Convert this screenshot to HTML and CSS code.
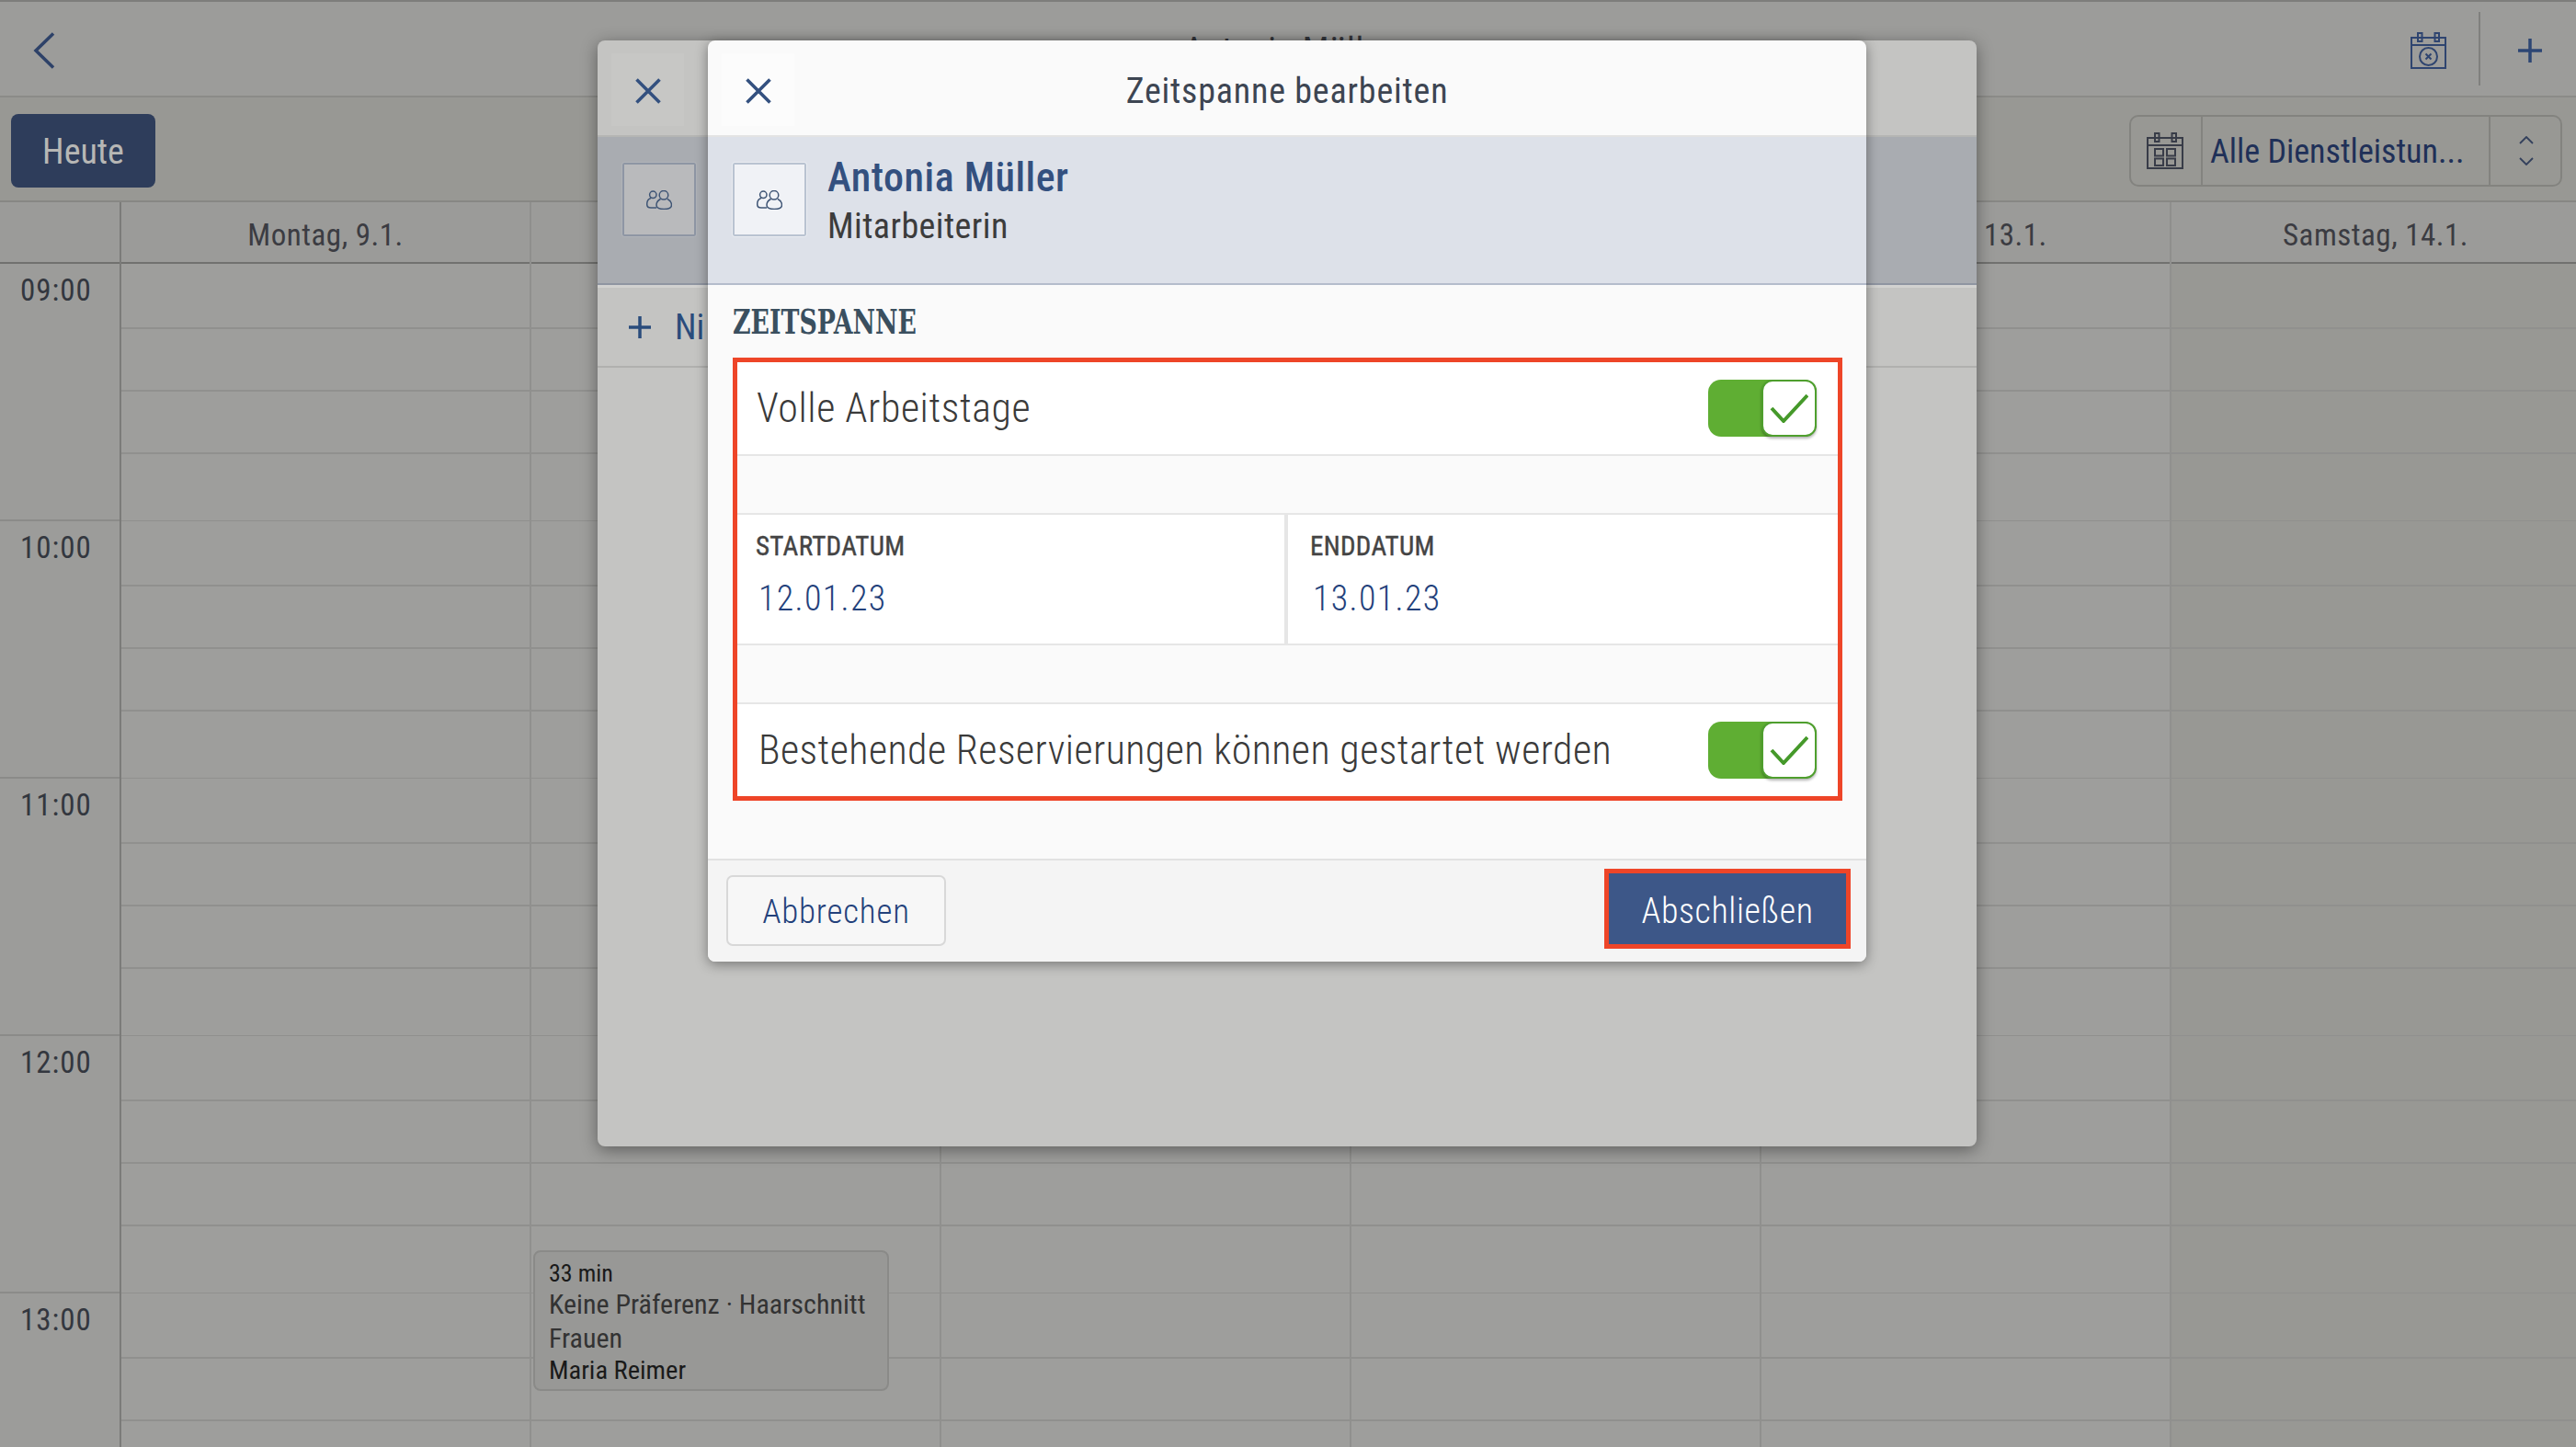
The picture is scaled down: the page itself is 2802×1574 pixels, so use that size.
FILE: index.html
```html
<!DOCTYPE html>
<html lang="de">
<head>
<meta charset="utf-8">
<title>Zeitspanne bearbeiten</title>
<link rel="stylesheet" href="styles.css">
</head>
<body>
<div class="app">
  <header class="topbar">
    <div class="topbar-left">
      <svg class="back-icon" viewBox="0 0 24 40"><path d="M22 1.500 3 20l19 18.500"/></svg>
    </div>
    <div class="topbar-title">Antonia Müller</div>
    <div class="topbar-right">
      <svg class="cal-x-icon" viewBox="0 0 39 40">
        <path d="M1 6h37v33H1zM1 14h37"/>
        <rect x="8" y="1" width="4.500" height="9"/><rect x="26.500" y="1" width="4.500" height="9"/>
        <circle cx="19.500" cy="26.500" r="9.500"/>
        <path d="M16.500 23.500l6 6M22.500 23.500l-6 6"/>
      </svg>
      <span class="topbar-divider"></span>
      <svg class="plus-icon" viewBox="0 0 26 26"><path d="M13 0v26M0 13h26"/></svg>
    </div>
  </header>

  <div class="subbar">
    <button class="today">Heute</button>
    <div class="segment">
      <div class="segment-icon">
        <svg class="cal-grid-icon" viewBox="0 0 40 40">
          <path d="M1 6h38v33H1zM1 14h38"/>
          <rect x="9" y="1" width="4.500" height="9"/><rect x="27.500" y="1" width="4.500" height="9"/>
          <rect x="9" y="18" width="9" height="7.500"/><rect x="22" y="18" width="9" height="7.500"/>
          <rect x="9" y="28.500" width="9" height="7.500"/><rect x="22" y="28.500" width="9" height="7.500"/>
        </svg>
      </div>
      <div class="segment-text">Alle Dienstleistun...</div>
      <div class="segment-arrows">
        <svg class="arrows-icon" viewBox="0 0 16 32"><path d="M1 8l7-7 7 7M1 24l7 7 7-7"/></svg>
      </div>
    </div>
  </div>

  <div class="day-head">
    <div class="head-gutter"></div>
    <div class="head-cell">Montag, 9.1.</div>
    <div class="head-cell">Dienstag, 10.1.</div>
    <div class="head-cell">Mittwoch, 11.1.</div>
    <div class="head-cell">Donnerstag, 12.1.</div>
    <div class="head-cell">Freitag, 13.1.</div>
    <div class="head-cell">Samstag, 14.1.</div>
  </div>

  <div class="calendar">
    <div class="gutter">
      <div class="hour">09:00</div>
      <div class="hour">10:00</div>
      <div class="hour">11:00</div>
      <div class="hour">12:00</div>
      <div class="hour">13:00</div>
    </div>
    <div class="day"></div>
    <div class="day">
      <div class="event">
        <div class="event-time">33 min</div>
        <div class="event-main">Keine Präferenz · Haarschnitt Frauen</div>
        <div class="event-name">Maria Reimer</div>
      </div>
    </div>
    <div class="day"></div>
    <div class="day"></div>
    <div class="day"></div>
    <div class="day day-sat"></div>
  </div>

  <section class="modal modal-back">
    <div class="modal-head">
      <button class="close close-back">
        <svg class="close-icon" viewBox="0 0 28 28"><path d="M1.500 1.500l25 25M26.500 1.500l-25 25"/></svg>
      </button>
    </div>
    <div class="person person-back">
      <div class="avatar avatar-back">
        <svg class="people-icon" viewBox="0 0 28 21"><circle cx="7.300" cy="4.800" r="3.700"/><path d="M5 8.500C1.800 9.500.7 12 .7 15c0 3 1.600 4 4.300 4h6"/><circle cx="19" cy="5.300" r="4.800"/><path d="M15.500 9.500C12.500 11 11 13 11 16c0 3 2.500 4.500 8.200 4.500S27.500 19 27.500 16c0-3-1.500-5-4.500-6.500"/></svg>
      </div>
    </div>
    <div class="add-row">
      <svg class="add-icon" viewBox="0 0 24 24"><path d="M12 0v24M0 12h24"/></svg>
      <span class="add-label">Ni</span>
    </div>
  </section>

  <section class="modal modal-front">
    <div class="modal-head">
      <button class="close">
        <svg class="close-icon" viewBox="0 0 28 28"><path d="M1.500 1.500l25 25M26.500 1.500l-25 25"/></svg>
      </button>
      <h1 class="modal-title">Zeitspanne bearbeiten</h1>
    </div>
    <div class="person">
      <div class="avatar">
        <svg class="people-icon" viewBox="0 0 28 21"><circle cx="7.300" cy="4.800" r="3.700"/><path d="M5 8.500C1.800 9.500.7 12 .7 15c0 3 1.600 4 4.300 4h6"/><circle cx="19" cy="5.300" r="4.800"/><path d="M15.500 9.500C12.500 11 11 13 11 16c0 3 2.500 4.500 8.200 4.500S27.500 19 27.500 16c0-3-1.500-5-4.500-6.500"/></svg>
      </div>
      <div class="person-text">
        <div class="person-name">Antonia Müller</div>
        <div class="person-role">Mitarbeiterin</div>
      </div>
    </div>
    <div class="section">
      <h2 class="section-title"><span>ZEITSPANNE</span></h2>
      <div class="red-box">
        <div class="row row-first">
          <span class="row-label">Volle Arbeitstage</span>
          <span class="toggle"><span class="thumb"><svg class="check" viewBox="0 0 42 32"><path d="M2 16l13 14L41 2"/></svg></span></span>
        </div>
        <div class="spacer"></div>
        <div class="dates">
          <div class="date-cell date-start">
            <div class="date-label">STARTDATUM</div>
            <div class="date-value">12.01.23</div>
          </div>
          <div class="date-cell date-end">
            <div class="date-label">ENDDATUM</div>
            <div class="date-value">13.01.23</div>
          </div>
        </div>
        <div class="spacer"></div>
        <div class="row row-last">
          <span class="row-label">Bestehende Reservierungen können gestartet werden</span>
          <span class="toggle"><span class="thumb"><svg class="check" viewBox="0 0 42 32"><path d="M2 16l13 14L41 2"/></svg></span></span>
        </div>
      </div>
    </div>
    <div class="modal-foot">
      <button class="btn-cancel">Abbrechen</button>
      <div class="btn-highlight"><button class="btn-done">Abschließen</button></div>
    </div>
  </section>
</div>
</body>
</html>
```
FILE: styles.css
```css
* { box-sizing: border-box; }
html, body { margin: 0; padding: 0; }
body {
  font-family: Roboto, "Liberation Sans", sans-serif;
  font-stretch: condensed;
  background: #9c9c9a;
}
button { font: inherit; font-stretch: condensed; border: 0; padding: 0; margin: 0; }
svg { display: block; fill: none; }
h1, h2 { margin: 0; font-weight: 400; }

.app {
  position: relative;
  width: 2802px;
  height: 1574px;
  overflow: hidden;
  display: flex;
  flex-direction: column;
}

/* top bar */
.topbar {
  flex: none;
  height: 106px;
  padding-top: 3px;
  display: grid;
  grid-template-columns: 1fr auto 1fr;
  align-items: center;
  background: #9c9c9a;
  border-top: 2px solid #7d7d7b;
  border-bottom: 2px solid #8b8b88;
}
.topbar-left { padding-left: 36px; }
.back-icon { width: 24px; height: 40px; stroke: #2d4168; stroke-width: 3.500; }
.topbar-title { font-size: 38px; color: #35373d; letter-spacing: .6px; }
.topbar-right { display: flex; align-items: center; justify-content: flex-end; padding-right: 37px; }
.cal-x-icon { width: 39px; height: 40px; stroke: #2f4570; stroke-width: 2; }
.topbar-divider { width: 2px; height: 80px; background: #80807e; margin: -3px 41px 0 35px; }
.plus-icon { width: 26px; height: 26px; stroke: #2d4674; stroke-width: 3.500; }

/* sub bar */
.subbar {
  flex: none;
  height: 114px;
  padding: 18px 15px 0 12px;
  display: flex;
  justify-content: space-between;
  align-items: flex-start;
  background: #989894;
  border-bottom: 2px solid #878784;
}
.today {
  width: 157px;
  height: 80px;
  padding-top: 2px;
  border-radius: 8px;
  background: #2e3d5b;
  color: #b7b7b5;
  font-size: 38px;
}
.segment {
  width: 471px;
  height: 78px;
  margin-top: 1px;
  display: flex;
  border: 2px solid #83837f;
  border-radius: 10px;
}
.segment-icon { width: 76px; display: flex; align-items: center; justify-content: center; padding-right: 2px; }
.cal-grid-icon { width: 40px; height: 40px; stroke: #383c48; stroke-width: 2; }
.segment-text {
  width: 315px;
  padding-left: 8px;
  border-left: 2px solid #83837f;
  border-right: 2px solid #83837f;
  color: #1f3058;
  font-size: 36px;
  line-height: 76px;
  white-space: nowrap;
}
.segment-arrows { flex: 1; display: flex; align-items: center; justify-content: center; padding-left: 1px; }
.arrows-icon { width: 16px; height: 32px; stroke: #33405c; stroke-width: 1.800; }

/* day header */
.day-head {
  flex: none;
  height: 67px;
  display: grid;
  grid-template-columns: 132px repeat(6, 446px);
  background: #9b9b99;
  border-bottom: 2px solid #71716f;
}
.head-gutter { border-right: 2px solid #7b7b79; }
.head-cell {
  border-right: 2px solid #8f8f8d;
  text-align: center;
  font-size: 33px;
  letter-spacing: .5px;
  line-height: 71px;
  color: #3b3c42;
}

/* calendar */
.calendar {
  flex: 1;
  min-height: 0;
  display: grid;
  grid-template-columns: 132px repeat(6, 446px);
}
.gutter { border-right: 2px solid #7b7b79; }
.hour {
  height: 280px;
  border-bottom: 2px solid #8b8b89;
  padding-left: 22px;
  font-size: 33px;
  letter-spacing: 1px;
  line-height: 57px;
  color: #33373f;
}
.day {
  position: relative;
  border-right: 2px solid #90908e;
  background: repeating-linear-gradient(to bottom,
    transparent 0 69px, #90908e 69px 71px,
    transparent 71px 137px, #90908e 137px 139px,
    transparent 139px 205px, #90908e 205px 207px,
    transparent 207px 279px, #90908e 279px 280px);
  background-color: #9e9e9c;
}
.day-sat { background-color: #989894; }
.event {
  position: absolute;
  left: 2px;
  top: 1073px;
  width: 387px;
  height: 153px;
  padding: 7px 6px 0 15px;
  background: #989896;
  border: 2px solid #8a8a88;
  border-radius: 8px;
  color: #333;
}
.event-time { color: #1a1a1a; font-size: 26px; line-height: 32px; }
.event-main { font-size: 30px; line-height: 37px; margin-top: -1px; }
.event-name { color: #1a1a1a; font-size: 28.500px; line-height: 32px; margin-top: 1px; }

/* modals */
.modal {
  position: absolute;
  top: 44px;
  display: flex;
  flex-direction: column;
  border-radius: 8px;
  overflow: hidden;
}
.modal-back {
  left: 650px;
  width: 1500px;
  height: 1203px;
  background: #c4c4c2;
  box-shadow: 0 4px 18px rgba(0, 0, 0, .4);
}
.modal-front {
  left: 770px;
  width: 1260px;
  height: 1002px;
  background: #fafafa;
  box-shadow: 0 3px 14px rgba(0, 0, 0, .4);
}
.modal-head {
  flex: none;
  height: 105px;
  display: grid;
  grid-template-columns: 94px 1fr 94px;
  align-items: start;
  border-bottom: 2px solid #e3e3e3;
}
.modal-back .modal-head { border-bottom-color: #b5b5b3; }
.close {
  width: 79px;
  height: 79px;
  margin: 14px 0 0 15px;
  padding-top: 3px;
  display: flex;
  align-items: center;
  justify-content: center;
  background: #fcfcfc;
}
.close-back { background: #c7c7c5; }
.close-icon { width: 28px; height: 28px; stroke: #33507f; stroke-width: 3.600; }
.modal-title {
  text-align: center;
  font-size: 38px;
  letter-spacing: .8px;
  line-height: 110px;
  color: #3d4552;
}

.person {
  flex: none;
  height: 161px;
  padding: 19px 0 0 27px;
  display: flex;
  align-items: flex-start;
  gap: 23px;
  background: #dde1e9;
  border-bottom: 2px solid #b4bccb;
}
.person-back { background: #a9acb1; border-bottom-color: #8f95a1; }
.avatar {
  width: 80px;
  height: 80px;
  margin-top: 9px;
  display: flex;
  align-items: center;
  justify-content: center;
  background: #f0f2f6;
  border: 2px solid #b9c3d1;
  outline: 1px solid #e9ecf1;
  border-radius: 2px;
}
.avatar-back { background: #b9babc; border-color: #8e96a4; outline-color: #b0b3b8; }
.people-icon { width: 28px; height: 21px; stroke: #3f5575; stroke-width: 1.500; }
.person-name { font-size: 44px; font-weight: 500; letter-spacing: .5px; line-height: 50px; color: #33507f; }
.person-role { font-size: 38px; letter-spacing: .4px; line-height: 56px; color: #3c3c3c; }

.add-row {
  flex: none;
  height: 90px;
  padding: 0 0 0 34px;
  display: flex;
  align-items: center;
  gap: 26px;
  border-top: 3px solid #d2d2d0;
  border-bottom: 2px solid #b0b0ae;
  color: #2a4c7c;
  font-size: 38px;
}
.add-icon { width: 24px; height: 24px; stroke: #2a4c7c; stroke-width: 3.500; }

.section { flex: 1; padding: 0 26px 63px 27px; }
.section-title { height: 79px; line-height: 80px; }
.section-title span {
  display: inline-block;
  font-family: "DejaVu Serif", serif;
  font-weight: 700;
  font-size: 37px;
  color: #3a4f5f;
  white-space: nowrap;
  transform: scaleX(.805);
  transform-origin: left center;
}
.red-box { height: 482px; border: 5px solid #ee4528; }
.row {
  height: 102px;
  display: flex;
  align-items: center;
  justify-content: space-between;
  padding: 0 23px 0 21px;
  background: #fff;
  border-bottom: 2px solid #e6e6e6;
}
.row-last { padding: 0 23px 0 23px; border-top: 2px solid #e6e6e6; border-bottom: 0; }
.row-label { font-size: 44px; font-weight: 300; letter-spacing: .55px; color: #3a3a3a; }
.row-last .row-label { letter-spacing: .4px; }
.toggle {
  width: 118px;
  height: 62px;
  display: flex;
  justify-content: flex-end;
  align-items: center;
  background: #5fae33;
  border-radius: 14px;
}
.thumb {
  width: 60px;
  height: 62px;
  display: flex;
  align-items: center;
  justify-content: center;
  background: #fff;
  border: 2px solid #4f9f2e;
  border-radius: 12px;
  box-shadow: 0 2px 3px rgba(0, 0, 0, .3);
}
.check { width: 42px; height: 32px; stroke: #45992a; stroke-width: 4; }
.spacer { height: 62px; }
.dates {
  height: 144px;
  display: grid;
  grid-template-columns: 597px 1fr;
  border-top: 2px solid #e6e6e6;
  border-bottom: 2px solid #e6e6e6;
}
.date-cell { background: #fff; padding: 13px 0 0 20px; }
.date-start { border-right: 2px solid #e6e6e6; }
.date-end { border-left: 2px solid #e6e6e6; padding-left: 24px; }
.date-label { font-size: 29px; line-height: 42px; letter-spacing: .3px; color: #444; -webkit-text-stroke: .4px #444; }
.date-value { margin: 15px 0 0 3px; font-size: 38px; font-weight: 300; letter-spacing: 1.300px; line-height: 42px; color: #23417b; }

.modal-foot {
  flex: none;
  height: 112px;
  padding: 9px 17px 0 20px;
  display: flex;
  justify-content: space-between;
  align-items: flex-start;
  background: #f4f4f4;
  border-top: 2px solid #e2e2e2;
}
.btn-cancel {
  width: 239px;
  height: 77px;
  margin-top: 7px;
  padding-top: 2px;
  background: #f7f7f7;
  border: 2px solid #d8d8d8;
  border-radius: 7px;
  color: #23417b;
  font-size: 37px;
  font-weight: 300;
  letter-spacing: .8px;
}
.btn-highlight { border: 5px solid #ee4528; width: 268px; height: 87px; }
.btn-done {
  display: block;
  width: 100%;
  height: 100%;
  padding-top: 5px;
  background: #3d5788;
  color: #fff;
  font-size: 38px;
  font-weight: 300;
  letter-spacing: .6px;
}
```
